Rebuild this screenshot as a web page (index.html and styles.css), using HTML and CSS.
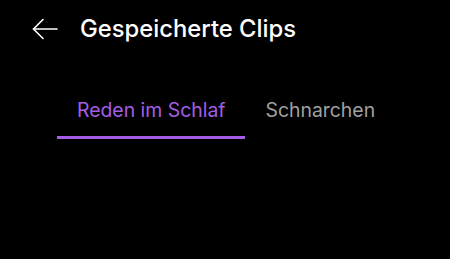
FILE: index.html
```html
<!DOCTYPE html>
<html lang="de">
<head>
<meta charset="utf-8">
<link rel="stylesheet" href="styles.css">
</head>
<body>
<header class="topbar">
  <svg class="back" width="26" height="22" viewBox="0 0 26 22" fill="none" stroke="#ffffff" stroke-width="1.6" stroke-linecap="round" stroke-linejoin="round">
    <path d="M1.5 11 H25"/>
    <path d="M11 1.5 L1.5 11 L11 20.5"/>
  </svg>
  <h1 class="title">Gespeicherte Clips</h1>
</header>
<nav class="tabs">
  <div class="tab active">Reden im Schlaf</div>
  <div class="tab">Schnarchen</div>
</nav>
</body>
</html>
```

FILE: styles.css
```css
html, body {
  margin: 0;
  padding: 0;
  background: #000;
  width: 450px;
  height: 259px;
  overflow: hidden;
  font-family: Inter, Roboto, "Noto Sans", sans-serif;
}
.topbar {
  display: flex;
  align-items: center;
  height: 57px;
  padding-left: 32px;
}
.back {
  display: block;
  margin-right: 22px;
}
.title {
  margin: 0;
  color: #fff;
  font-size: 23.8px;
  font-weight: 500;
  letter-spacing: 0;
}
.tabs {
  display: flex;
  margin: 35px 0 0 57px;
}
.tab {
  padding: 0 20px;
  height: 47px;
  line-height: 37px;
  font-size: 19.4px;
  color: #a0a0a0;
  box-sizing: border-box;
}
.tab.active {
  color: #a45ee5;
  border-bottom: 3px solid #a45ee5;
}
```
